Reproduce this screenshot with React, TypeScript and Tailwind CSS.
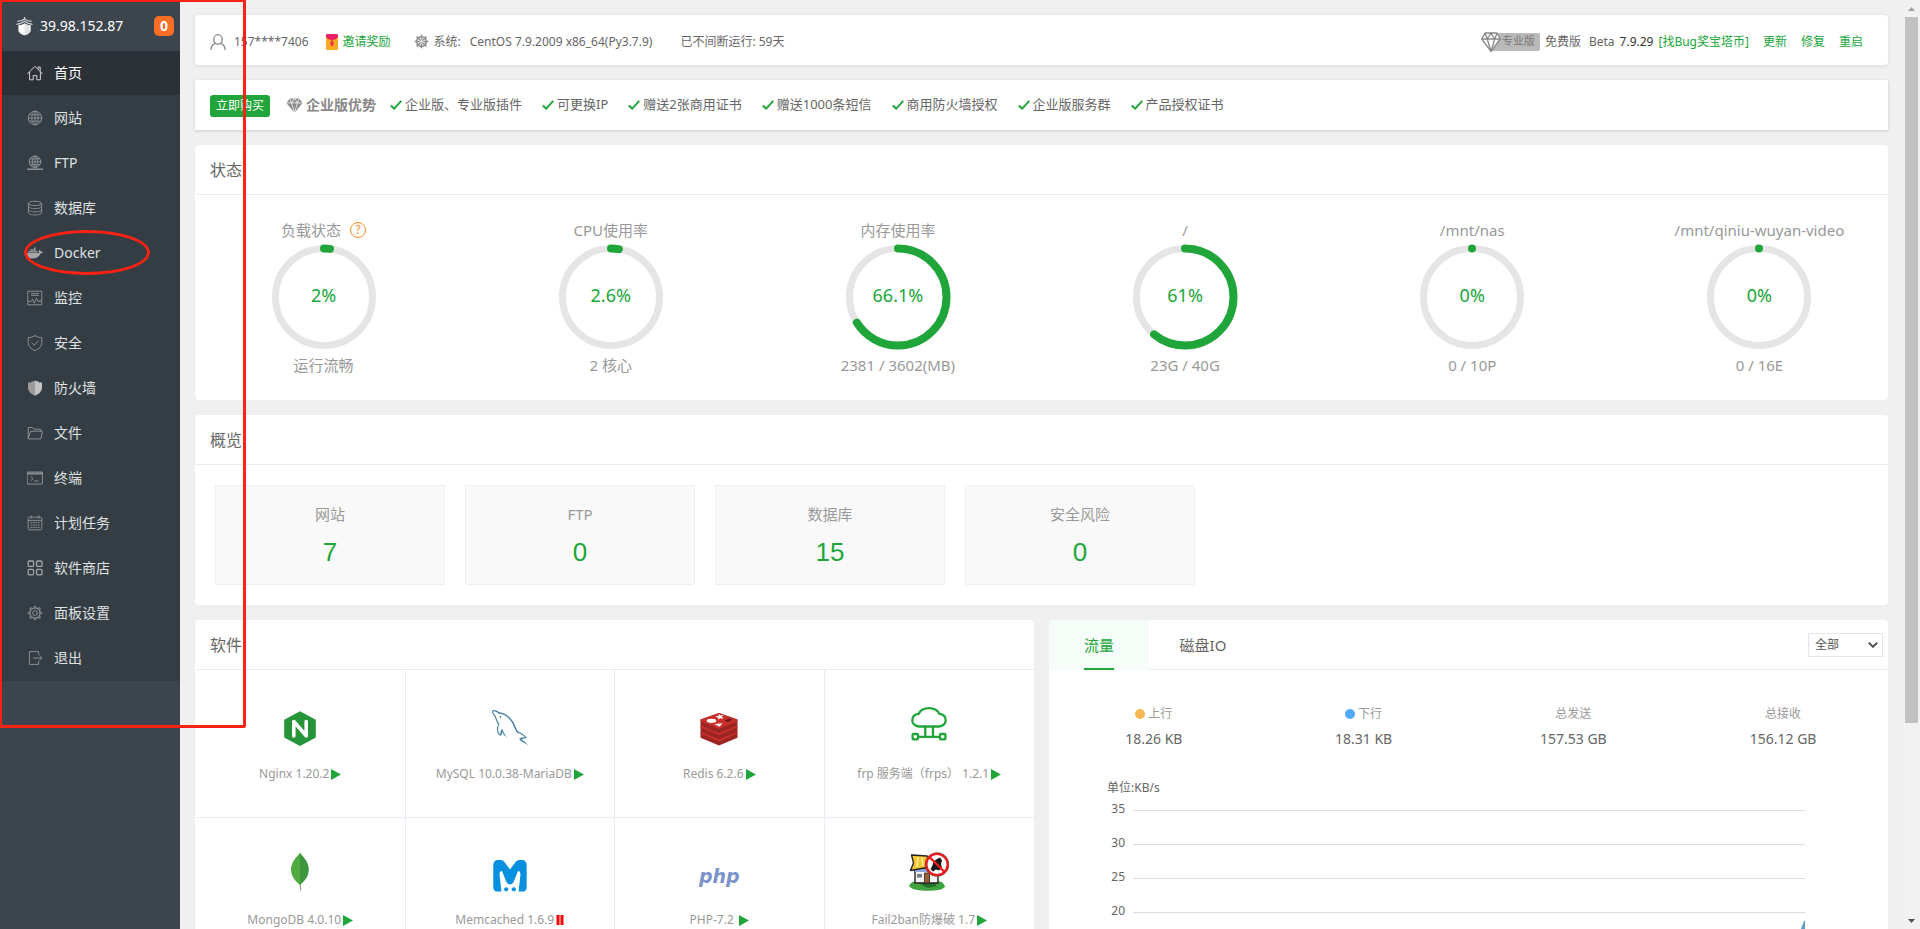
import React, { useState } from "react";
import { FaDocker } from "react-icons/fa";
import { GrMysql } from "react-icons/gr";

type IconProps = { children: React.ReactNode; className?: string };

function Line({ children, className = "size-4" }: IconProps) {
  return (
    <svg viewBox="0 0 16 16" className={className} fill="none" stroke="currentColor" strokeWidth="1" strokeLinejoin="round" strokeLinecap="round" aria-hidden="true">
      {children}
    </svg>
  );
}

const gearTeeth = [0, 45, 90, 135, 180, 225, 270, 315];

const menu: { label: string; icon: React.ReactNode }[] = [
  {
    label: "首页",
    icon: (
      <Line>
        <path d="M.7 8.6 8 1.3l7.3 7.3M2.6 7.2v7.6h3.6v-4.2h3.6v4.2h3.6V7.2M11.2 4V2h2v4" />
      </Line>
    ),
  },
  {
    label: "网站",
    icon: (
      <Line>
        <circle cx="8" cy="8" r="6.8" />
        <ellipse cx="8" cy="8" rx="3.2" ry="6.8" />
        <path d="M8 1.2v13.6M1.2 8h13.6M2.2 4.8h11.6M2.2 11.2h11.6" />
      </Line>
    ),
  },
  {
    label: "FTP",
    icon: (
      <Line>
        <circle cx="8" cy="6.8" r="5.8" />
        <ellipse cx="8" cy="6.8" rx="2.7" ry="5.8" />
        <path d="M8 1v12.6M2.2 6.8h11.6M3.2 3.9h9.6M3.2 9.7h9.6" />
        <path d="M.6 14.2h14.8" strokeWidth="1.6" />
      </Line>
    ),
  },
  {
    label: "数据库",
    icon: (
      <Line>
        <ellipse cx="8" cy="3.4" rx="6.6" ry="2.2" />
        <path d="M1.4 3.4v9.4c0 1.2 3 2.2 6.6 2.2s6.6-1 6.6-2.2V3.4M1.4 6.5c0 1.2 3 2.2 6.6 2.2s6.6-1 6.6-2.2M1.4 9.7c0 1.2 3 2.2 6.6 2.2s6.6-1 6.6-2.2" />
      </Line>
    ),
  },
  { label: "Docker", icon: <FaDocker className="size-4" aria-hidden="true" /> },
  {
    label: "监控",
    icon: (
      <Line>
        <path d="M1.2 1.2h13.6v13.6H1.2zM4.5 3.6h7M4.5 5.4h7M1.5 11.6h2.6L5.6 9l1.8 4.2L9.6 8l1.6 3.6h1l.8-1.4.8 1.4" />
      </Line>
    ),
  },
  {
    label: "安全",
    icon: (
      <Line>
        <path d="M8 .8c2 1.2 4.2 1.8 6.8 1.8v5c0 3.600-2.600 6.200-6.800 8-4.200-1.800-6.800-4.400-6.800-8v-5C3.800 2.600 6 2 8 .8zM4.800 7.800l2.400 2.400 4.200-4.400" />
      </Line>
    ),
  },
  {
    label: "防火墙",
    icon: (
      <svg viewBox="0 0 16 16" className="size-4" aria-hidden="true">
        <path d="M8 .4C7 1.300 5.800 1.600 4.600 1.500L4 2.500H1v5c0 3.900 3 6.500 7 8.300z" fill="#9b9b9b" />
        <path d="M8 .4c1 .9 2.200 1.200 3.400 1.100l.6 1h3v5c0 3.900-3 6.500-7 8.300z" fill="#c4c4c4" />
      </svg>
    ),
  },
  {
    label: "文件",
    icon: (
      <Line>
        <path d="M1.200 13.500V2.500h4.300l1.500 1.700h6.600v2M1.200 13.500 3.600 6.200h11.800l-1.400 7.300z" />
      </Line>
    ),
  },
  {
    label: "终端",
    icon: (
      <Line>
        <path d="M.6 2h14.800v12H.6z" />
        <path d="M.8 3.500h14.400" strokeWidth="2" />
        <path d="m4 6.600 2.200 2L4 10.600M7.600 11h3.600" />
      </Line>
    ),
  },
  {
    label: "计划任务",
    icon: (
      <Line>
        <path d="M1.200 3.200c0-.6.4-1 1-1h11.600c.6 0 1 .4 1 1v10.600c0 .6-.4 1-1 1H2.200c-.6 0-1-.4-1-1zM1.200 5.400h13.600M4.200.8v2.400M11.800.8v2.400" />
        <path d="M3.600 7.600h9M3.600 10h9M3.600 12.400h9" strokeDasharray="1.800 .6" strokeLinecap="butt" />
      </Line>
    ),
  },
  {
    label: "软件商店",
    icon: (
      <Line>
        <g strokeWidth="1.300">
          <rect x="1.200" y="1" width="5.400" height="5.400" rx="1" />
          <rect x="9.600" y="1" width="5.400" height="5.400" rx="1" />
          <rect x="1.200" y="9.400" width="5.400" height="5.400" rx="1" />
          <rect x="9.600" y="9.400" width="5.400" height="5.400" rx="1" />
        </g>
      </Line>
    ),
  },
  {
    label: "面板设置",
    icon: (
      <Line>
        <circle cx="8" cy="8" r="2.400" />
        <circle cx="8" cy="8" r="5" />
        {gearTeeth.map((a) => (
          <path key={a} d="M6.700 3.100 7.200 1.300h1.600l.5 1.800" transform={`rotate(${a} 8 8)`} />
        ))}
      </Line>
    ),
  },
  {
    label: "退出",
    icon: (
      <Line>
        <path d="M11.600 4.400V1.600H2.400v12.800h9.200v-2.800M6.600 8h8M12.600 5.800 15 8l-2.400 2.200" />
      </Line>
    ),
  },
];

function Sidebar() {
  return (
    <aside className="flex w-[180px] shrink-0 flex-col bg-[#3c444d]">
      <div className="flex h-[51px] shrink-0 items-center pr-1.5 pl-4 text-white">
        <svg viewBox="0 0 18 20" className="h-5 w-[17px]" fill="none" aria-hidden="true">
          <path d="M9 .5v3M1.500 5.200Q5.500 4.800 9 2.500q3.500 2.300 7.500 2.700M.5 8.300Q5.500 7.600 9 5q3.500 2.600 8.500 3.300" stroke="#d5d7da" strokeWidth="1.300" />
          <path d="M9 7C7.500 8.200 5 9 2.600 9.200v6.300C3.600 17.500 6 19 9 19.800c3-.8 5.400-2.300 6.400-4.300V9.200C13 9 10.500 8.200 9 7z" fill="#fff" />
          <path d="M9 7c1.500 1.200 4 2 6.400 2.200v6.300c-1 2-3.400 3.500-6.400 4.300z" fill="#e2e3e5" />
        </svg>
        <span className="ml-[7px] flex-1 text-sm">39.98.152.87</span>
        <span className="flex size-5 items-center justify-center rounded-[5px] bg-[#fc6d26] text-sm font-bold">0</span>
      </div>
      <nav className="bg-[#353d44]">
        <ul>
          {menu.map((item, i) => (
            <li key={item.label} className="pb-px">
              <a
                href="#"
                className={
                  i === 0
                    ? "flex h-11 items-center gap-[11px] bg-[#2c3138] pl-[27px] text-sm text-white"
                    : "flex h-11 items-center gap-[11px] pl-[27px] text-sm text-[#dfe1e2]"
                }
              >
                <span className={i === 0 ? "text-[#d0d2d4]" : i === 4 || i === 11 ? "text-[#a4a6a8]" : "text-[#8a8e92]"}>{item.icon}</span>
                {item.label}
              </a>
            </li>
          ))}
        </ul>
      </nav>
    </aside>
  );
}

function TopBar() {
  return (
    <header className="flex h-[50px] shrink-0 items-center justify-between rounded-[4px] bg-white pt-[3px] pr-[25px] pl-[15px] text-xs text-[#666] shadow-[0_1px_5px_rgba(0,0,0,0.09)]">
      <div className="flex items-center">
        <svg viewBox="0 0 16 16" className="size-4" fill="none" stroke="#888" strokeWidth="1.300" aria-hidden="true">
          <ellipse cx="8" cy="5.400" rx="4.200" ry="4.700" />
          <path d="M.8 16c.2-3.600 1.800-5.800 4.600-6.700M15.200 16c-.2-3.600-1.800-5.800-4.600-6.700" />
        </svg>
        <span className="ml-2">157****7406</span>
        <svg viewBox="0 0 12 16" className="ml-[17px] h-4 w-3" aria-hidden="true">
          <rect x="0" y="1" width="12" height="15" rx="1.500" fill="#f9a825" />
          <path d="M1.500 0h9c.8 0 1.500.7 1.500 1.500V3C10 5.400 8 6 6 6S2 5.400 0 3V1.500C0 .7.700 0 1.500 0z" fill="#e91e63" />
          <path d="M6 5.500 8 9l-1.500 3.500h-1L4 9z" fill="#e53946" />
        </svg>
        <a href="#" className="ml-[5px] text-[#20a53a]">邀请奖励</a>
        <svg viewBox="0 0 16 16" className="ml-[23px] size-[15px]" fill="none" stroke="#888" aria-hidden="true">
          <circle cx="8" cy="8" r="5.200" strokeWidth="1.500" />
          <circle cx="8" cy="8" r="1.800" strokeWidth="1" />
          {gearTeeth.map((a) => (
            <path key={a} d="M8 .7v2M8 3.500v2" strokeWidth="1.800" transform={`rotate(${a} 8 8)`} />
          ))}
        </svg>
        <span className="ml-[5px]">系统:</span>
        <span className="ml-[9px]">CentOS 7.9.2009 x86_64(Py3.7.9)</span>
        <span className="ml-7">已不间断运行: 59天</span>
      </div>
      <div className="flex items-center">
        <svg viewBox="0 0 20 20" className="z-10 size-5" fill="#fff" stroke="#888" strokeWidth="1.300" strokeLinejoin="round" aria-hidden="true">
          <path d="M4 1h12l3.300 6L10 19.300.7 7z" />
          <path d="M.7 7h18.600M4 1l2.200 6L10 19.300 13.800 7 16 1M6.200 7 10 1l3.800 6" fill="none" />
        </svg>
        <span className="-ml-2.5 flex h-[18px] items-center rounded-r-[2px] bg-[#b9b9b9] pr-[5px] pl-[11px] text-[11px] text-[#777]">专业版</span>
        <span className="ml-[5px]">免费版</span>
        <span className="ml-2">Beta</span>
        <span className="ml-[5px] text-[#333]">7.9.29</span>
        <a href="#" className="ml-[5px] text-[#20a53a]">[找Bug奖宝塔币]</a>
        <a href="#" className="ml-3.5 text-[#20a53a]">更新</a>
        <a href="#" className="ml-3.5 text-[#20a53a]">修复</a>
        <a href="#" className="ml-3.5 text-[#20a53a]">重启</a>
      </div>
    </header>
  );
}

const perks = ["企业版、专业版插件", "可更换IP", "赠送2张商用证书", "赠送1000条短信", "商用防火墙授权", "企业版服务群", "产品授权证书"];

function Banner() {
  return (
    <section className="flex h-[50px] shrink-0 items-center bg-white px-[15px] text-[13px] text-[#666] shadow-[0_1px_3px_rgba(0,0,0,0.16)]">
      <button type="button" className="mt-0.5 h-[22px] rounded-[3px] bg-[#20a53a] px-1.5 text-xs text-white">立即购买</button>
      <svg viewBox="0 0 18 16" className="ml-4 h-[15px] w-[17px]" aria-hidden="true">
        <path d="M3.800.5h10.400L17.700 5.200 9 15.700.3 5.200z" fill="#8b8b8b" />
        <path d="M.3 5.200h17.400M3.800.5l2 4.700L9 15.700l3.200-10.500 2-4.700M5.800 5.200 9 .5l3.200 4.700" stroke="#fff" strokeWidth=".8" fill="none" />
      </svg>
      <strong className="ml-[3px] text-sm text-[#888]">企业版优势</strong>
      <ul className="ml-3.5 flex items-center gap-5">
        {perks.map((p) => (
          <li key={p} className="flex items-center gap-[3px]">
            <svg viewBox="0 0 12 10" className="h-2.5 w-3" fill="none" stroke="#20a53a" strokeWidth="2" aria-hidden="true">
              <path d="M.8 5.400 4.200 8.600 11.300.8" />
            </svg>
            {p}
          </li>
        ))}
      </ul>
    </section>
  );
}

function CardTitle({ children }: { children: React.ReactNode }) {
  return <h2 className="flex h-[50px] items-center border-b border-[#ececec] px-[15px] text-base text-[#666]">{children}</h2>;
}

const gauges = [
  { title: "负载状态", pct: 2, foot: "运行流畅", help: true },
  { title: "CPU使用率", pct: 2.6, foot: "2 核心" },
  { title: "内存使用率", pct: 66.1, foot: "2381 / 3602(MB)" },
  { title: "/", pct: 61, foot: "23G / 40G" },
  { title: "/mnt/nas", pct: 0, foot: "0 / 10P" },
  { title: "/mnt/qiniu-wuyan-video", pct: 0, foot: "0 / 16E" },
];

function Status() {
  return (
    <section className="shrink-0 rounded-[4px] bg-white">
      <CardTitle>状态</CardTitle>
      <div className="-mx-[15px] grid grid-cols-6 pt-[25px] pb-[25px] text-[15px] text-[#999]">
        {gauges.map((g) => (
          <div key={g.title} className="flex flex-col items-center">
            <div className="flex h-5 items-center gap-[9px] leading-5">
              {g.title}
              {g.help && (
                <button type="button" aria-label="帮助" className="flex size-4 items-center justify-center rounded-full border border-[#ff8a1f] text-xs leading-none text-[#ff8a1f]">
                  ?
                </button>
              )}
            </div>
            <div className="mt-1 grid place-items-center">
              <svg viewBox="0 0 106 106" className="size-[106px] [grid-area:1/1]" fill="none" aria-hidden="true">
                <circle cx="53" cy="53" r="48.500" stroke="#e5e5e5" strokeWidth="7" />
                <circle cx="53" cy="53" r="48.500" stroke="#20a53a" strokeWidth="8" strokeLinecap="round" pathLength="100" strokeDasharray={`${g.pct} 100`} transform="rotate(-90 53 53)" />
              </svg>
              <span className="pb-1 text-lg text-[#20a53a] [grid-area:1/1]">{g.pct}%</span>
            </div>
            <div className="mt-[5px] leading-5">{g.foot}</div>
          </div>
        ))}
      </div>
    </section>
  );
}

const totals = [
  { label: "网站", n: 7 },
  { label: "FTP", n: 0 },
  { label: "数据库", n: 15 },
  { label: "安全风险", n: 0 },
];

function Overview() {
  return (
    <section className="shrink-0 rounded-[4px] bg-white">
      <CardTitle>概览</CardTitle>
      <div className="flex gap-5 p-5">
        {totals.map((t) => (
          <a key={t.label} href="#" className="flex h-[100px] w-[230px] flex-col items-center rounded-[2px] border border-[#efefef] bg-[#f9f9f9] pt-[18px]">
            <span className="text-[15px] leading-5 text-[#999]">{t.label}</span>
            <span className="mt-3 font-['Liberation_Sans',sans-serif] text-[26px] leading-8 text-[#20a53a]">{t.n}</span>
          </a>
        ))}
      </div>
    </section>
  );
}

function NginxLogo() {
  return (
    <svg viewBox="0 0 40 40" className="size-10" aria-hidden="true">
      <path d="M20 5.200 35.800 13.800v17.600L20 40 4.200 31.400V13.800z" fill="#269539" />
      <path d="M13.800 30V15.500L26.200 29.800V15.500" fill="none" stroke="#fff" strokeWidth="3.600" strokeLinejoin="round" strokeLinecap="round" />
    </svg>
  );
}

function RedisLogo() {
  return (
    <svg viewBox="0 0 40 40" className="size-10" aria-hidden="true">
      {[19.5, 13.200, 7].map((y) => (
        <g key={y} transform={`translate(0 ${y})`}>
          <path d="M20 0 38.500 6.600v5.600L20 20 1.500 12.200V6.600z" fill="#9b2522" />
          <path d="M20 0 38.500 6.600v1.500L20 16 1.500 8.100V6.600z" fill="#c92f2a" />
        </g>
      ))}
      <ellipse cx="12.500" cy="14.800" rx="4.800" ry="2.100" fill="#fff" />
      <path d="m15.500 18 8-.8-3 3.600z" fill="#fff" />
      <path d="m20.300 8.500 1.200 1.200 2.600-.4-1.600 1.600 1.400 1.500-2.600-.5-1.700 1.200-.3-1.700-2.400-.8 2.800-.5z" fill="#fff" stroke="#fff" strokeWidth=".6" />
      <path d="m25.500 14.600 5.200-2.200 2.800 1.200-4.800 2.600z" fill="#621b1c" />
    </svg>
  );
}

function FrpLogo() {
  return (
    <svg viewBox="0 0 40 40" className="size-10" fill="none" stroke="#20a53a" strokeWidth="2.300" aria-hidden="true">
      <path d="M10 20.500c-3.800 0-6.700-2.700-6.700-6.200 0-3.400 2.300-5.900 6.300-6.400C11.500 4.200 15 2.200 20 2.200s8.500 2 10.400 5.700c4 .5 6.300 3 6.300 6.400 0 3.500-2.900 6.200-6.700 6.200z" />
      <path d="M16.300 21v9.500M24 21v9.500M9 30.800h22" />
      <rect x="3.600" y="28" width="5.400" height="5.400" rx="1" />
      <rect x="31" y="28" width="5.400" height="5.400" rx="1" />
    </svg>
  );
}

function MongoLogo() {
  return (
    <svg viewBox="0 0 40 40" className="size-10" aria-hidden="true">
      <path d="M19.300 30h1.400l.6 8.500h-1.200z" fill="#a6a385" />
      <path d="M20 .5c-2.500 4.500-9 8.500-9 17 0 7 4.500 11.500 9 15.500z" fill="#4faa41" />
      <path d="M20 .5c2.500 4.500 8.800 8.500 8.800 17 0 7-4.300 11.500-8.800 15.500z" fill="#40953f" />
    </svg>
  );
}

function MemcachedLogo() {
  return (
    <svg viewBox="0 0 40 40" className="size-10" aria-hidden="true">
      <path d="M3.300 13c0-3 1.700-5 4.700-5h2.500c2 0 3.300.8 4.500 2.800l5 6.700 5-6.700c1.200-2 2.500-2.800 4.500-2.800H32c3 0 4.700 2 4.700 5v22c0 3-1.500 4.500-3.500 4.500H28.600L30.500 22c-.1-2-1.400-3.500-2.500-3L23.800 29.500c-1.600 4-6 4-7.600 0L12 19c-1.100-.5-2.400 1-2.500 3l1.900 17.500H6.800c-2 0-3.500-1.500-3.500-4.500z" fill="#078fe0" />
      <circle cx="16.200" cy="37.300" r="2.100" fill="#078fe0" />
      <circle cx="23.800" cy="37.300" r="2.100" fill="#078fe0" />
    </svg>
  );
}

function Fail2banLogo() {
  return (
    <svg viewBox="0 0 40 40" className="size-10" aria-hidden="true">
      <path d="M0 34c2-4 5-5 8-5h20c4 0 7 2 8 6-3 3-8 3.700-17 3.700S3 38 0 34z" fill="#3fa33e" />
      <path d="M10 31.500h17v2.500l-8 2z" fill="#25702b" />
      <path d="M6 17h23v14H6z" fill="#f3f3f3" stroke="#222" strokeWidth="1.400" />
      <path d="M6 17h23v3H6z" fill="#8fa6dc" />
      <path d="M15.500 21h5v10h-5z" fill="#9a5f33" stroke="#222" strokeWidth=".8" />
      <path d="M8 22h5v3.500H8z" fill="#777" />
      <path d="M2.500 3 18 4l8 10-24.500 4.500L4.500 11z" fill="#f7c531" stroke="#222" strokeWidth="1.300" strokeLinejoin="round" />
      <path d="m9 5-1 10M13 5.500l1 8.500" stroke="#fff0a0" strokeWidth="1.500" />
      <circle cx="28" cy="12.500" r="10.800" fill="#fff" stroke="#ee1c1c" strokeWidth="2.600" />
      <path d="m28 7 3-1.500 2 3-1 3.500 1 4-3 2.500-3-1-3 2-2.500-2.500 2-3.500 1-4z" fill="#171717" />
      <path d="m20.500 5 15 15" stroke="#ee1c1c" strokeWidth="2.400" />
      <circle cx="28" cy="12.500" r="12" fill="none" stroke="#555" strokeWidth=".5" />
    </svg>
  );
}

const software: { name: string; logo: React.ReactNode; running: boolean }[] = [
  { name: "Nginx 1.20.2", logo: <NginxLogo />, running: true },
  { name: "MySQL 10.0.38-MariaDB", logo: <GrMysql className="mt-1 size-9 text-[#3d7fa3] [&_path]:fill-current" aria-hidden="true" />, running: true },
  { name: "Redis 6.2.6", logo: <RedisLogo />, running: true },
  { name: "frp 服务端（frps） 1.2.1", logo: <FrpLogo />, running: true },
  { name: "MongoDB 4.0.10", logo: <MongoLogo />, running: true },
  { name: "Memcached 1.6.9", logo: <MemcachedLogo />, running: false },
  {
    name: "PHP-7.2 ",
    logo: <span className="pt-2 font-['DejaVu_Sans',sans-serif] text-[19px] leading-5 font-bold text-[#7b93c9] italic">php</span>,
    running: true,
  },
  { name: "Fail2ban防爆破 1.7", logo: <Fail2banLogo />, running: true },
];

function Software() {
  return (
    <section className="min-w-0 flex-1 rounded-t-[4px] bg-white">
      <CardTitle>软件</CardTitle>
      <ul className="grid grid-cols-4 pl-px">
        {software.map((s, i) => (
          <li key={s.name} className={i % 4 === 3 ? "border-b border-[#ebebf5]" : "border-r border-b border-[#ebebf5]"}>
            <a
              href="#"
              className={
                i < 4
                  ? "flex h-[147px] flex-col items-center pt-9 text-xs text-[#999]"
                  : "flex h-[147px] flex-col items-center pt-[34px] text-xs text-[#999]"
              }
            >
              <span className="flex h-10 items-center justify-center">{s.logo}</span>
              <span className="mt-[18px] flex items-center leading-5 whitespace-pre">
                {s.name}
                {s.running ? (
                  <svg viewBox="0 0 10 11" className="ml-0.5 h-[11px] w-2.5" aria-hidden="true">
                    <path d="M0 0 10 5.500 0 11z" fill="#20a53a" />
                  </svg>
                ) : (
                  <svg viewBox="0 0 8 10" className="ml-0.5 h-2.5 w-2" aria-hidden="true">
                    <path d="M.5 0h3v10h-3zM4.500 0h3v10h-3z" fill="#f00" />
                  </svg>
                )}
              </span>
            </a>
          </li>
        ))}
      </ul>
    </section>
  );
}

const traffic = [
  { label: "上行", value: "18.26 KB", dot: "bg-[#f7b851]" },
  { label: "下行", value: "18.31 KB", dot: "bg-[#52a9ff]" },
  { label: "总发送", value: "157.53 GB", dot: "" },
  { label: "总接收", value: "156.12 GB", dot: "" },
];

function Traffic() {
  const [tab, setTab] = useState(0);
  return (
    <section className="min-w-0 flex-1 overflow-hidden rounded-t-[4px] bg-white">
      <div className="flex h-[50px] items-stretch border-b border-[#e8ebe9] text-[15px]">
        {["流量", "磁盘IO"].map((t, i) => (
          <button
            key={t}
            type="button"
            onClick={() => setTab(i)}
            className={i === tab ? "-mb-px flex w-[100px] justify-center bg-[#f6fcf8] text-[#20a53a]" : "-mb-px flex w-[108px] justify-center text-[#666]"}
          >
            <span className={i === tab ? "flex h-full items-center border-b-2 border-[#20a53a] pt-0.5" : "flex h-full items-center"}>{t}</span>
          </button>
        ))}
        <div className="mr-[5px] ml-auto grid items-center pt-px">
          <select aria-label="网卡" className="h-6 w-[75px] appearance-none border border-[#e6e6e6] bg-white pl-1.5 text-xs text-[#555] [grid-area:1/1]">
            <option>全部</option>
          </select>
          <svg viewBox="0 0 10 6" className="pointer-events-none mr-[5px] h-1.5 w-2.5 justify-self-end [grid-area:1/1]" fill="none" stroke="#555" strokeWidth="2" aria-hidden="true">
            <path d="m.8.8 4.200 4 4.200-4" />
          </svg>
        </div>
      </div>
      <div className="grid grid-cols-4 pt-[34px]">
        {traffic.map((t) => (
          <div key={t.label} className="flex flex-col items-center">
            <span className="flex items-center gap-[3px] text-xs leading-5 text-[#999]">
              {t.dot && <i className={`size-2.5 rounded-full ${t.dot}`} />}
              {t.label}
            </span>
            <span className="mt-[5px] text-sm leading-5 text-[#666]">{t.value}</span>
          </div>
        ))}
      </div>
      <div className="relative mr-[83px] ml-[58px] pt-[29px] text-xs text-[#666]">
        <div className="leading-5">单位:KB/s</div>
        <div className="pt-px">
          {[35, 30, 25, 20].map((n) => (
            <div key={n} className="flex h-[34px] items-start">
              <span className="w-[26px] pr-2 text-right leading-5">{n}</span>
              <i className="mt-[11px] h-px flex-1 bg-[#dcdcdc]" />
            </div>
          ))}
        </div>
        <svg viewBox="0 0 4 8" className="absolute right-0 bottom-1.5 h-2 w-1" aria-hidden="true">
          <path d="M0 8 3 0h1v8z" fill="#5a9bc8" />
        </svg>
      </div>
    </section>
  );
}

function ScrollRail() {
  return (
    <div className="flex w-[17px] shrink-0 flex-col items-center bg-[#f1f1f1]" aria-hidden="true">
      <svg viewBox="0 0 17 17" className="size-[17px] shrink-0">
        <path d="M5 11h7L8.500 7z" fill="#a3a3a3" />
      </svg>
      <div className="w-[13px] flex-[706_0_0%] bg-[#c1c1c1]" />
      <div className="flex-[189_0_0%]" />
      <svg viewBox="0 0 17 17" className="size-[17px] shrink-0">
        <path d="M5 7h7l-3.500 4z" fill="#505050" />
      </svg>
    </div>
  );
}

function Markup() {
  return (
    <div className="pointer-events-none absolute top-0 left-0 z-20" aria-hidden="true">
      <div className="h-[728px] w-[246px] rounded-br-[2px] border-t-2 border-r-3 border-b-3 border-l-2 border-[#ff2213]" />
      <div className="absolute top-[230px] left-6 h-[45px] w-[126px] rounded-[50%] border-3 border-[#ff2213]" />
    </div>
  );
}

export default function App() {
  return (
    <div className="relative flex h-screen overflow-hidden bg-[#f0f0f0] font-['Noto_Sans','Noto_Sans_CJK_SC',sans-serif]">
      <Sidebar />
      <main className="flex min-w-0 flex-1 flex-col gap-[15px] overflow-hidden px-[15px] pt-[15px]">
        <TopBar />
        <Banner />
        <Status />
        <Overview />
        <div className="flex min-h-0 flex-1 gap-[15px]">
          <Software />
          <Traffic />
        </div>
      </main>
      <ScrollRail />
      <Markup />
    </div>
  );
}
